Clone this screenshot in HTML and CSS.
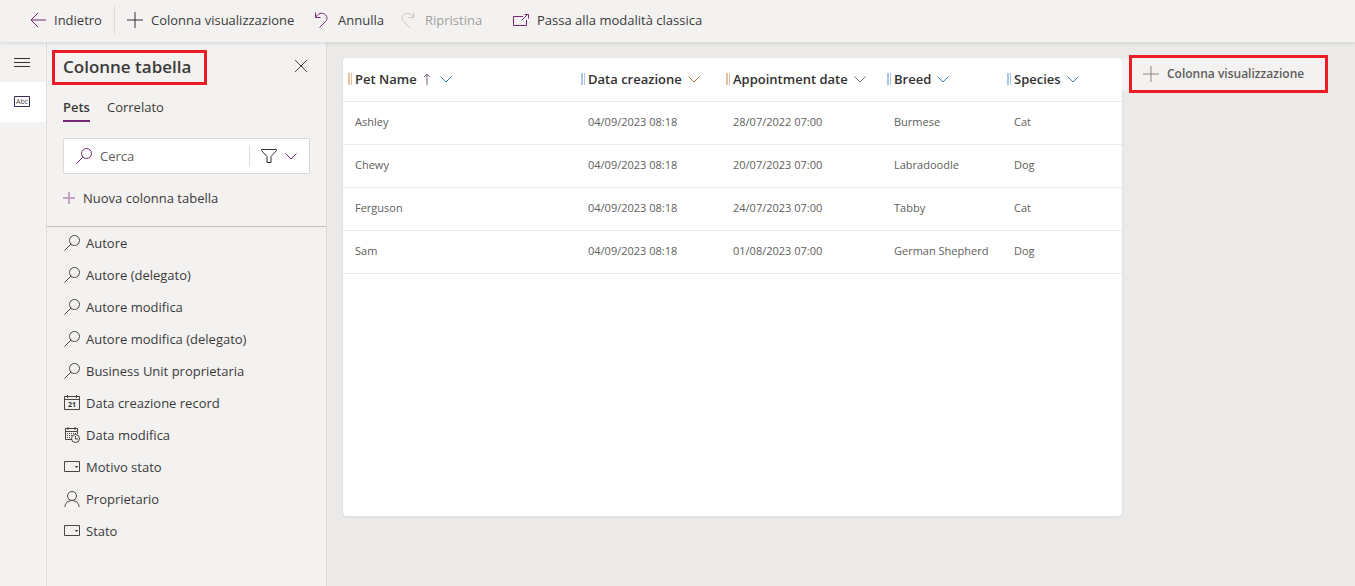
FILE: index.html
```html
<!DOCTYPE html>
<html lang="it">
<head>
<meta charset="utf-8">
<title>Colonne tabella</title>
<link rel="stylesheet" href="styles.css">
</head>
<body>
<svg class="sprite" aria-hidden="true">
  <symbol id="plus" viewBox="0 0 16 16"><path d="M8 0v16M0 8h16"/></symbol>
  <symbol id="chevron" viewBox="0 0 12 12"><path d="M.5 3.500L6 9l5.500-5.500"/></symbol>
  <symbol id="search" viewBox="0 0 16 16"><circle cx="10.500" cy="5.500" r="5"/><path d="M7 9L.5 15.500"/></symbol>
  <symbol id="option" viewBox="0 0 16 16"><path d="M.5 2.500h15v10H.5z"/><path class="solid" d="M10.500 7h4l-2 2z"/></symbol>
</svg>

<header class="toolbar">
  <button class="command back" type="button"><svg class="icon accent" viewBox="0 0 16 16"><path d="M16 8H1M8 1L1 8l7 7"/></svg>Indietro</button>
  <span class="separator"></span>
  <button class="command add" type="button"><svg class="icon dark"><use href="#plus"/></svg>Colonna visualizzazione</button>
  <button class="command undo" type="button"><svg class="icon accent" viewBox="0 0 16 16"><path d="M1.500 .5v5h5M1.500 5.500C4 1 8 .5 10.500 2s3.500 5 1 7.500L5.500 15.500"/></svg>Annulla</button>
  <button class="command redo" type="button" disabled><svg class="icon" viewBox="0 0 16 16"><path d="M12.500 .5v5h-5M12.500 5.500C10 1 6 .5 3.500 2s-3.500 5-1 7.500L8.500 15.500"/></svg>Ripristina</button>
  <button class="command classic" type="button"><svg class="icon accent" viewBox="0 0 16 16"><path d="M10 4.500H.5v9h13V8M8.500 8.500L15 2M11.500 2.500h4v4"/></svg>Passa alla modalità classica</button>
</header>

<div class="workspace">
  <nav class="rail" aria-label="Navigazione">
    <button class="rail-item" type="button" aria-label="Menu"><svg class="icon dark" viewBox="0 0 16 16"><path d="M0 4.500h16M0 8.500h16M0 12.500h16"/></svg></button>
    <button class="rail-item selected" type="button" aria-label="Colonne"><svg class="icon" viewBox="0 0 16 16"><path class="frame" d="M.5 2.500h15v10H.5z"/><text x="2" y="10">Abc</text></svg></button>
  </nav>

  <aside class="panel">
    <div class="panel-top">
      <h1 class="panel-title">Colonne tabella</h1>
      <button class="close" type="button" aria-label="Chiudi"><svg viewBox="0 0 14 14"><path d="M1 1l12 12M13 1L1 13"/></svg></button>
    </div>
    <div class="tabs" role="tablist">
      <button class="tab active" type="button" role="tab" aria-selected="true">Pets</button>
      <button class="tab" type="button" role="tab" aria-selected="false">Correlato</button>
    </div>
    <div class="search">
      <svg class="icon accent"><use href="#search"/></svg>
      <input class="search-input" type="search" placeholder="Cerca" aria-label="Cerca">
      <button class="filter" type="button" aria-label="Filtra">
        <svg class="icon funnel" viewBox="0 0 16 16"><path d="M.5 1.500h15v1L10 8.500v6H6v-6L.5 2.500z"/></svg>
        <svg class="chevron accent"><use href="#chevron"/></svg>
      </button>
    </div>
    <button class="new-column" type="button"><svg class="new-icon" viewBox="0 0 12 12"><path d="M6 0v12M0 6h12"/></svg>Nuova colonna tabella</button>
    <ul class="columns">
      <li class="column"><svg class="icon"><use href="#search"/></svg>Autore</li>
      <li class="column"><svg class="icon"><use href="#search"/></svg>Autore (delegato)</li>
      <li class="column"><svg class="icon"><use href="#search"/></svg>Autore modifica</li>
      <li class="column"><svg class="icon"><use href="#search"/></svg>Autore modifica (delegato)</li>
      <li class="column"><svg class="icon"><use href="#search"/></svg>Business Unit proprietaria</li>
      <li class="column"><svg class="icon" viewBox="0 0 16 16"><path d="M.5 1.500h15v13H.5zM.5 4.500h15M3.500 0v3M12.500 0v3"/><text class="day" x="4" y="12">21</text></svg>Data creazione record</li>
      <li class="column"><svg class="icon" viewBox="0 0 16 16"><path d="M8 12.500H1.500v-11h12V7M1.500 4.500h12M4 0v3M11 0v3"/><path class="dots" d="M3 6.500h9M3 8.500h5M3 10.500h4"/><circle cx="11.500" cy="11.500" r="4"/><path d="M11.500 9v3H14"/></svg>Data modifica</li>
      <li class="column"><svg class="icon"><use href="#option"/></svg>Motivo stato</li>
      <li class="column"><svg class="icon" viewBox="0 0 16 16"><circle cx="8" cy="5" r="4.500"/><path d="M1 16c0-4 3-6.500 7-6.500s7 2.500 7 6.500"/></svg>Proprietario</li>
      <li class="column"><svg class="icon"><use href="#option"/></svg>Stato</li>
    </ul>
  </aside>

  <main class="canvas">
    <div class="card">
      <table class="grid">
        <colgroup><col><col class="c-created"><col class="c-date"><col class="c-choice"><col class="c-choice"></colgroup>
        <thead>
          <tr>
            <th scope="col"><button class="head warm" type="button">Pet Name<svg class="sort" viewBox="0 0 8 12"><path d="M4 12V1M1 4l3-3 3 3"/></svg><svg class="chevron blue"><use href="#chevron"/></svg></button></th>
            <th scope="col"><button class="head" type="button">Data creazione<svg class="chevron gold"><use href="#chevron"/></svg></button></th>
            <th scope="col"><button class="head warm" type="button">Appointment date<svg class="chevron"><use href="#chevron"/></svg></button></th>
            <th scope="col"><button class="head" type="button">Breed<svg class="chevron blue"><use href="#chevron"/></svg></button></th>
            <th scope="col"><button class="head" type="button">Species<svg class="chevron slate"><use href="#chevron"/></svg></button></th>
          </tr>
        </thead>
        <tbody>
          <tr><td>Ashley</td><td>04/09/2023 08:18</td><td>28/07/2022 07:00</td><td>Burmese</td><td>Cat</td></tr>
          <tr><td>Chewy</td><td>04/09/2023 08:18</td><td>20/07/2023 07:00</td><td>Labradoodle</td><td>Dog</td></tr>
          <tr><td>Ferguson</td><td>04/09/2023 08:18</td><td>24/07/2023 07:00</td><td>Tabby</td><td>Cat</td></tr>
          <tr><td>Sam</td><td>04/09/2023 08:18</td><td>01/08/2023 07:00</td><td>German Shepherd</td><td>Dog</td></tr>
        </tbody>
      </table>
    </div>
    <button class="add-column" type="button"><svg class="icon"><use href="#plus"/></svg>Colonna visualizzazione</button>
  </main>
</div>
</body>
</html>
```
FILE: styles.css
```css
*, *::before, *::after { box-sizing: border-box; }

body {
  margin: 0;
  min-height: 100vh;
  display: flex;
  flex-direction: column;
  background: #ebeae8;
  color: #3b3a39;
  font: 13px/20px "Open Sans", "Noto Sans", sans-serif;
}

button {
  margin: 0;
  padding: 0;
  border: 0;
  background: none;
  color: inherit;
  font: inherit;
  white-space: nowrap;
}

svg { flex: none; fill: none; stroke: #484644; }
.sprite { position: absolute; width: 0; height: 0; }
.icon { width: 16px; height: 16px; }
.chevron { width: 12px; height: 12px; stroke: #6b7a8c; }
.accent { stroke: #742774; }
.dark { stroke: #323130; }
.blue { stroke: #2b88c8; }
.gold { stroke: #a07a35; }
.slate { stroke: #5078a8; }
.solid { fill: #484644; stroke: none; }

.toolbar {
  position: relative;
  display: flex;
  align-items: center;
  height: 42px;
  padding: 0 0 2px 30px;
  background: #f3f2f1;
  box-shadow: 0 1px 4px rgba(0, 0, 0, 0.12);
}
.command { display: flex; align-items: center; gap: 8px; }
.command:disabled { color: #a19f9d; }
.command:disabled svg { stroke: #c8c6c4; }
.back { width: 84px; }
.separator { width: 1px; height: 28px; margin-right: 12px; background: #dddbd9; }
.add { width: 187px; }
.undo { width: 87px; }
.redo { width: 112px; }

.workspace { flex: 1; display: flex; }

.rail { width: 47px; flex: none; background: #f3f2f1; border-right: 1px solid #e1dfdd; }
.rail-item { display: flex; align-items: center; width: 46px; height: 40px; padding-left: 14px; }
.selected { background: #fff; }
.frame { stroke: #3b2a55; }
.rail-item text { font-size: 7px; fill: #484644; stroke: none; }

.panel { width: 280px; flex: none; background: #f3f2f1; border-right: 1px solid #dddbd9; }
.panel-top { display: flex; justify-content: space-between; align-items: flex-start; padding: 8px 18px 0 5px; }
.panel-title {
  margin: 0;
  width: 155px;
  padding: 2px 8px 3px;
  border: 3px solid #ed1c24;
  font-size: 17px;
  line-height: 24px;
  font-weight: 600;
  white-space: nowrap;
}
.close { display: flex; padding: 9px 0; }
.close svg { width: 14px; height: 14px; }

.tabs { display: flex; gap: 17px; padding: 11px 16px 0; }
.tab { height: 26px; padding-bottom: 3px; border-bottom: 2px solid transparent; }
.active { border-color: #742774; font-weight: 600; }

.search {
  display: flex;
  align-items: center;
  height: 36px;
  margin: 16px 16px 0;
  padding-left: 12px;
  background: #fff;
  border: 1px solid #dddbd9;
}
.search-input {
  flex: 1;
  min-width: 0;
  padding: 0 8px;
  border: 0;
  outline: 0;
  background: none;
  font: inherit;
}
.search-input::placeholder { color: #605e5c; opacity: 1; }
.filter { display: flex; align-items: center; gap: 8px; height: 20px; padding: 0 12px 0 11px; border-left: 1px solid #dddbd9; }
.funnel { stroke: #323130; }

.new-column { display: flex; align-items: center; gap: 8px; margin: 14px 16px 18px; }
.new-icon { width: 12px; height: 12px; stroke: #c7a5c7; stroke-width: 2; }

.columns { margin: 0; padding: 0; list-style: none; border-top: 1px solid #c2c0be; }
.column { display: flex; align-items: center; gap: 6px; height: 32px; padding-left: 17px; }
.day { font-size: 7px; font-weight: 700; fill: #323130; stroke: none; }
.dots { stroke-dasharray: 1 1; }

.canvas { flex: 1; min-width: 0; display: flex; align-items: flex-start; padding: 16px 27px 70px 16px; }
.card { flex: 1; align-self: stretch; background: #fff; border-radius: 4px; box-shadow: 0 1px 3px rgba(0, 0, 0, 0.08); }
.grid { width: 100%; table-layout: fixed; border-collapse: collapse; }
.c-created { width: 145px; }
.c-date { width: 161px; }
.c-choice { width: 120px; }
.grid th, .grid td { height: 43px; padding: 0 0 0 12px; border-bottom: 1px solid #edebe9; text-align: left; white-space: nowrap; }
.grid th { padding-left: 5px; }
.grid td { padding-bottom: 2px; color: #605e5c; font-size: 11px; }
.head { display: flex; align-items: center; gap: 6px; color: #323130; font-weight: 600; }
.head::before {
  content: "";
  width: 4px;
  height: 12px;
  margin-right: -3px;
  border: solid #a9c8ea;
  border-width: 0 1px 0 2px;
}
.warm::before { border-color: #e6bfa0; }
.sort { width: 8px; height: 12px; margin-right: 3px; stroke: #75607c; }

.add-column {
  position: relative;
  display: flex;
  align-items: center;
  gap: 8px;
  width: 206px;
  height: 32px;
  padding-left: 21px;
  background: #f3f2f1;
  color: #605e5c;
  font-size: 12px;
  font-weight: 600;
}
.add-column svg { stroke: #8a8886; }
.add-column::after { content: ""; position: absolute; inset: -3px 0 -3px 7px; border: 3px solid #ed1c24; }
```
